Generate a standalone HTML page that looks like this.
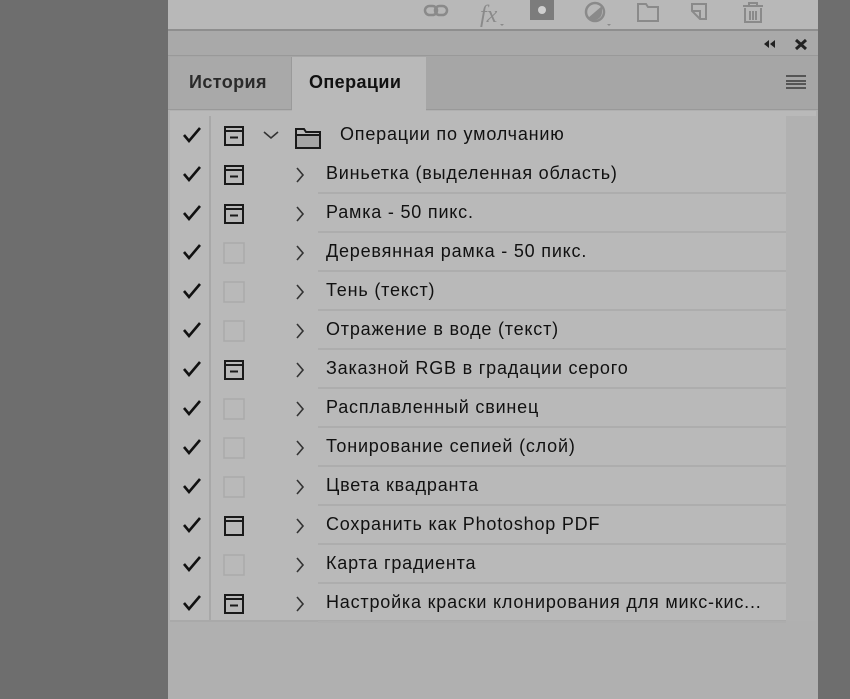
<!DOCTYPE html>
<html><head><meta charset="utf-8"><style>
*{margin:0;padding:0;box-sizing:border-box}
body{width:850px;height:699px;background:#6e6e6e;position:relative;overflow:hidden;font-family:"Liberation Sans","DejaVu Sans",sans-serif}
.a{position:absolute}
.row{position:absolute;left:170px;width:616px;height:39px}
.row .t{position:absolute;left:156px;top:8px;font-size:18px;letter-spacing:0.8px;color:#111;white-space:nowrap}
.row .sep{position:absolute;left:148px;right:0;bottom:0;height:2px;background:#adadad}
.ck{position:absolute;left:11px;top:9px}
.ic{position:absolute;left:53px;top:9px}
.ch{position:absolute;left:125px;top:11px}
</style></head><body>
<div class="a" style="left:168px;top:0;width:650px;height:699px;background:#b0b0b0"></div>
<div class="a" style="left:168px;top:0;width:650px;height:30px;background:#b8b8b8"></div>
<div class="a" style="left:168px;top:29px;width:650px;height:2px;background:#8e8e8e"></div>
<svg class="a" style="left:420px;top:0" width="360" height="30" viewBox="0 0 360 30" fill="none" stroke="#8a8a8a" stroke-width="2.5">
<rect x="5" y="6" width="12" height="9" rx="4.5"/><rect x="15" y="6" width="12" height="9" rx="4.5"/>
<text x="60" y="22" font-family="Liberation Serif" font-style="italic" font-size="24" fill="#8a8a8a" stroke="none">fx</text>
<path d="M80 24l2 2 2-2z" fill="#8a8a8a" stroke="none"/>
<rect x="110" y="0" width="24" height="20" fill="#7c7c7c" stroke="none"/><circle cx="122" cy="10" r="4" fill="#cfcfcf" stroke="none"/>
<circle cx="175" cy="12" r="9"/><path d="M168 18L182 6L182 12A8 8 0 0 1 170 19Z" fill="#8a8a8a" stroke="none"/>
<path d="M187 24l2 2 2-2z" fill="#8a8a8a" stroke="none"/>
<path d="M218 4h8l2 3h10v14h-20z" stroke-width="2"/>
<path d="M272 4h14v15h-6l-8-8z M272 11h8v8" stroke-width="2"/>
<path d="M323 6h20 M329 6v-3h8v3 M325 8v14h16V8 M330 11v9 M333 11v9 M336 11v9" stroke-width="2"/>
</svg>
<div class="a" style="left:168px;top:31px;width:650px;height:25px;background:#a9a9a9;border-bottom:1px solid #999"></div>
<svg class="a" style="left:758px;top:37px" width="50" height="14" viewBox="0 0 50 14" fill="#222">
<path d="M6 7l5-4v8z M12 7l5-4v8z"/>
<path d="M38 3l10 9M48 3l-10 9" stroke="#222" stroke-width="3"/>
</svg>
<div class="a" style="left:168px;top:56px;width:650px;height:54px;background:#a6a6a6;border-bottom:1px solid #999"></div>
<div class="a" style="left:170px;top:57px;width:122px;height:52px;background:#a9a9a9;border-right:1px solid #9a9a9a"></div>
<div class="a" style="left:189px;top:72px;font-size:18px;letter-spacing:0.4px;color:#2a2a2a;font-weight:bold">История</div>
<div class="a" style="left:292px;top:57px;width:134px;height:54px;background:#b9b9b9"></div>
<div class="a" style="left:309px;top:72px;font-size:18px;letter-spacing:0.4px;color:#111;font-weight:bold">Операции</div>
<div class="a" style="left:786px;top:75px;width:20px;height:14px;border-top:2px solid #555;border-bottom:2px solid #555"></div>
<div class="a" style="left:786px;top:80px;width:20px;height:4px;border-top:2px solid #555;border-bottom:0"></div>
<div class="a" style="left:786px;top:83px;width:20px;height:2px;background:#555"></div>
<div class="a" style="left:170px;top:111px;width:646px;height:510px;background:#b9b9b9"></div>
<div class="a" style="left:786px;top:116px;width:30px;height:505px;background:#b1b1b1"></div>
<div class="a" style="left:170px;top:620px;width:616px;height:2px;background:#a9a9a9"></div>
<div class="a" style="left:209px;top:116px;width:2px;height:504px;background:#a8a8a8"></div>

<div id="rows"></div>
<script>
const items=[["Операции по умолчанию","f"],["Виньетка (выделенная область)","f"],["Рамка - 50 пикс.","f"],["Деревянная рамка - 50 пикс.","e"],["Тень (текст)","e"],["Отражение в воде (текст)","e"],["Заказной RGB в градации серого","f"],["Расплавленный свинец","e"],["Тонирование сепией (слой)","e"],["Цвета квадранта","e"],["Сохранить как Photoshop PDF","b"],["Карта градиента","e"],["Настройка краски клонирования для микс-кис...","f"]];
let h="";
items.forEach((it,i)=>{
 const top=116+39*i;
 let ic;
 if(it[1]=="e") ic='<rect x="1" y="1" width="20" height="20" fill="none" stroke="#aaa" stroke-width="1.5"/>';
 else ic='<rect x="2" y="2" width="18" height="18" fill="none" stroke="#1a1a1a" stroke-width="2"/><path d="M2 6h18" stroke="#1a1a1a" stroke-width="2"/>'+(it[1]=="f"?'<path d="M7 12.5h8" stroke="#1a1a1a" stroke-width="2"/>':'');
 let chev, tx=156;
 if(i==0){chev='<svg class="ch" style="left:92px;top:14px" width="18" height="10"><path d="M2 2l7 6 7-6" fill="none" stroke="#333" stroke-width="1.6"/></svg><svg class="a" style="left:124px;top:10px" width="28" height="24"><path d="M2 3h8l2 3h14v16H2z M2 9h24" fill="none" stroke="#1a1a1a" stroke-width="2"/><rect x="3" y="10" width="22" height="11" fill="#a5a5a5"/></svg>';tx=170}
 else chev='<svg class="ch" width="10" height="18"><path d="M2 2l6 7-6 7" fill="none" stroke="#333" stroke-width="1.6"/></svg>';
 h+=`<div class="row" style="top:${top}px">
 <svg class="ck" width="22" height="20"><path d="M3 10l5 6L19 3" fill="none" stroke="#111" stroke-width="2.6"/></svg>
 <svg class="ic" width="22" height="22">${ic}</svg>${chev}
 <div class="t" style="left:${tx}px">${it[0]}</div>${i>0?'<div class="sep"></div>':''}</div>`;
});
document.getElementById("rows").innerHTML=h;
</script>
</body></html>
